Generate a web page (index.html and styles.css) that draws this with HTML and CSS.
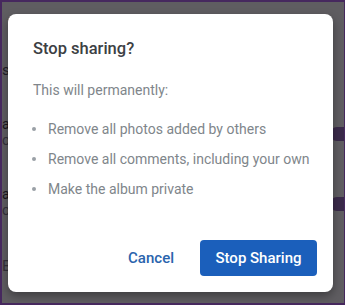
FILE: index.html
```html
<!DOCTYPE html>
<html>
<head>
<meta charset="utf-8">
<link rel="stylesheet" href="styles.css">
</head>
<body>
<div class="screen">
  <div class="backdrop">
    <div class="bg-line bg-t">t</div>
    <div class="bg-line bg-colon">s:</div>
    <div class="bg-row"><span class="bg-dark">al</span><span class="bg-light">ot</span><span class="toggle"></span></div>
    <div class="bg-row bg-row2"><span class="bg-dark">ar</span><span class="bg-light">ot</span><span class="toggle"></span></div>
    <div class="bg-line bg-b">B</div>
  </div>
  <div class="dialog" role="dialog">
    <h2 class="title">Stop sharing?</h2>
    <p class="lead">This will permanently:</p>
    <ul class="list">
      <li>Remove all photos added by others</li>
      <li>Remove all comments, including your own</li>
      <li>Make the album private</li>
    </ul>
    <div class="actions">
      <button class="btn btn-text">Cancel</button>
      <button class="btn btn-primary">Stop Sharing</button>
    </div>
  </div>
</div>
</body>
</html>
```
FILE: styles.css
```css
* { box-sizing: border-box; }
html, body { margin: 0; padding: 0; }
body {
  width: 345px;
  height: 305px;
  overflow: hidden;
  font-family: Roboto, "Noto Sans", sans-serif;
}
.screen {
  position: relative;
  width: 345px;
  height: 305px;
  border: 2px solid #46285e;
  border-right-width: 1px;
  background: #5f5d61;
  overflow: hidden;
}
.backdrop {
  display: flex;
  flex-direction: column;
  color: #1a1620;
  font-size: 15px;
}
.bg-line { line-height: 17px; }
.bg-t { margin-top: 12px; padding-left: 6px; }
.bg-colon { margin-top: 31px; color: #221e28; }
.bg-row {
  display: flex;
  flex-direction: column;
  gap: 1px;
  margin-top: 38px;
  position: relative;
  font-size: 14px;
  line-height: 15px;
}
.bg-row2 { margin-top: 39px; }
.bg-light { color: #35313b; }
.toggle {
  position: absolute;
  right: -6px;
  top: 10px;
  width: 20px;
  height: 14px;
  border-radius: 7px;
  background: #3a2a4a;
}
.bg-b { margin-top: 40px; color: #35313b; }

.dialog {
  position: absolute;
  left: 6px;
  top: 12px;
  width: 325px;
  height: 278px;
  background: #fff;
  border-radius: 8px;
  box-shadow: 0 4px 10px rgba(0,0,0,0.35);
  padding: 24px 16px 16px 25px;
  display: flex;
  flex-direction: column;
}
.title {
  margin: 0;
  font-size: 16.5px;
  font-weight: 500;
  color: #3c4043;
  line-height: 22px;
}
.lead {
  margin: 20px 0 0;
  font-size: 14px;
  color: #80868b;
  line-height: 20px;
}
.list {
  margin: 19px 0 0;
  padding: 0 0 0 15px;
  list-style: none;
  font-size: 14px;
  color: #80868b;
}
.list li {
  position: relative;
  line-height: 20px;
  margin-bottom: 10px;
}
.list li::before {
  content: "";
  position: absolute;
  left: -16px;
  top: 8px;
  width: 4px;
  height: 4px;
  border-radius: 50%;
  background: #9aa0a6;
}
.actions {
  margin-top: auto;
  display: flex;
  justify-content: flex-end;
  align-items: center;
  gap: 10px;
}
.btn {
  font-family: Roboto, "Noto Sans", sans-serif;
  font-size: 15px;
  font-weight: 500;
  border: none;
  border-radius: 4px;
  height: 36px;
  cursor: pointer;
}
.btn-text {
  background: transparent;
  color: #2a64ad;
  padding: 0 16px;
}
.btn-primary {
  background: #1b5fbb;
  color: #fff;
  width: 117px;
  padding: 0;
}
```
